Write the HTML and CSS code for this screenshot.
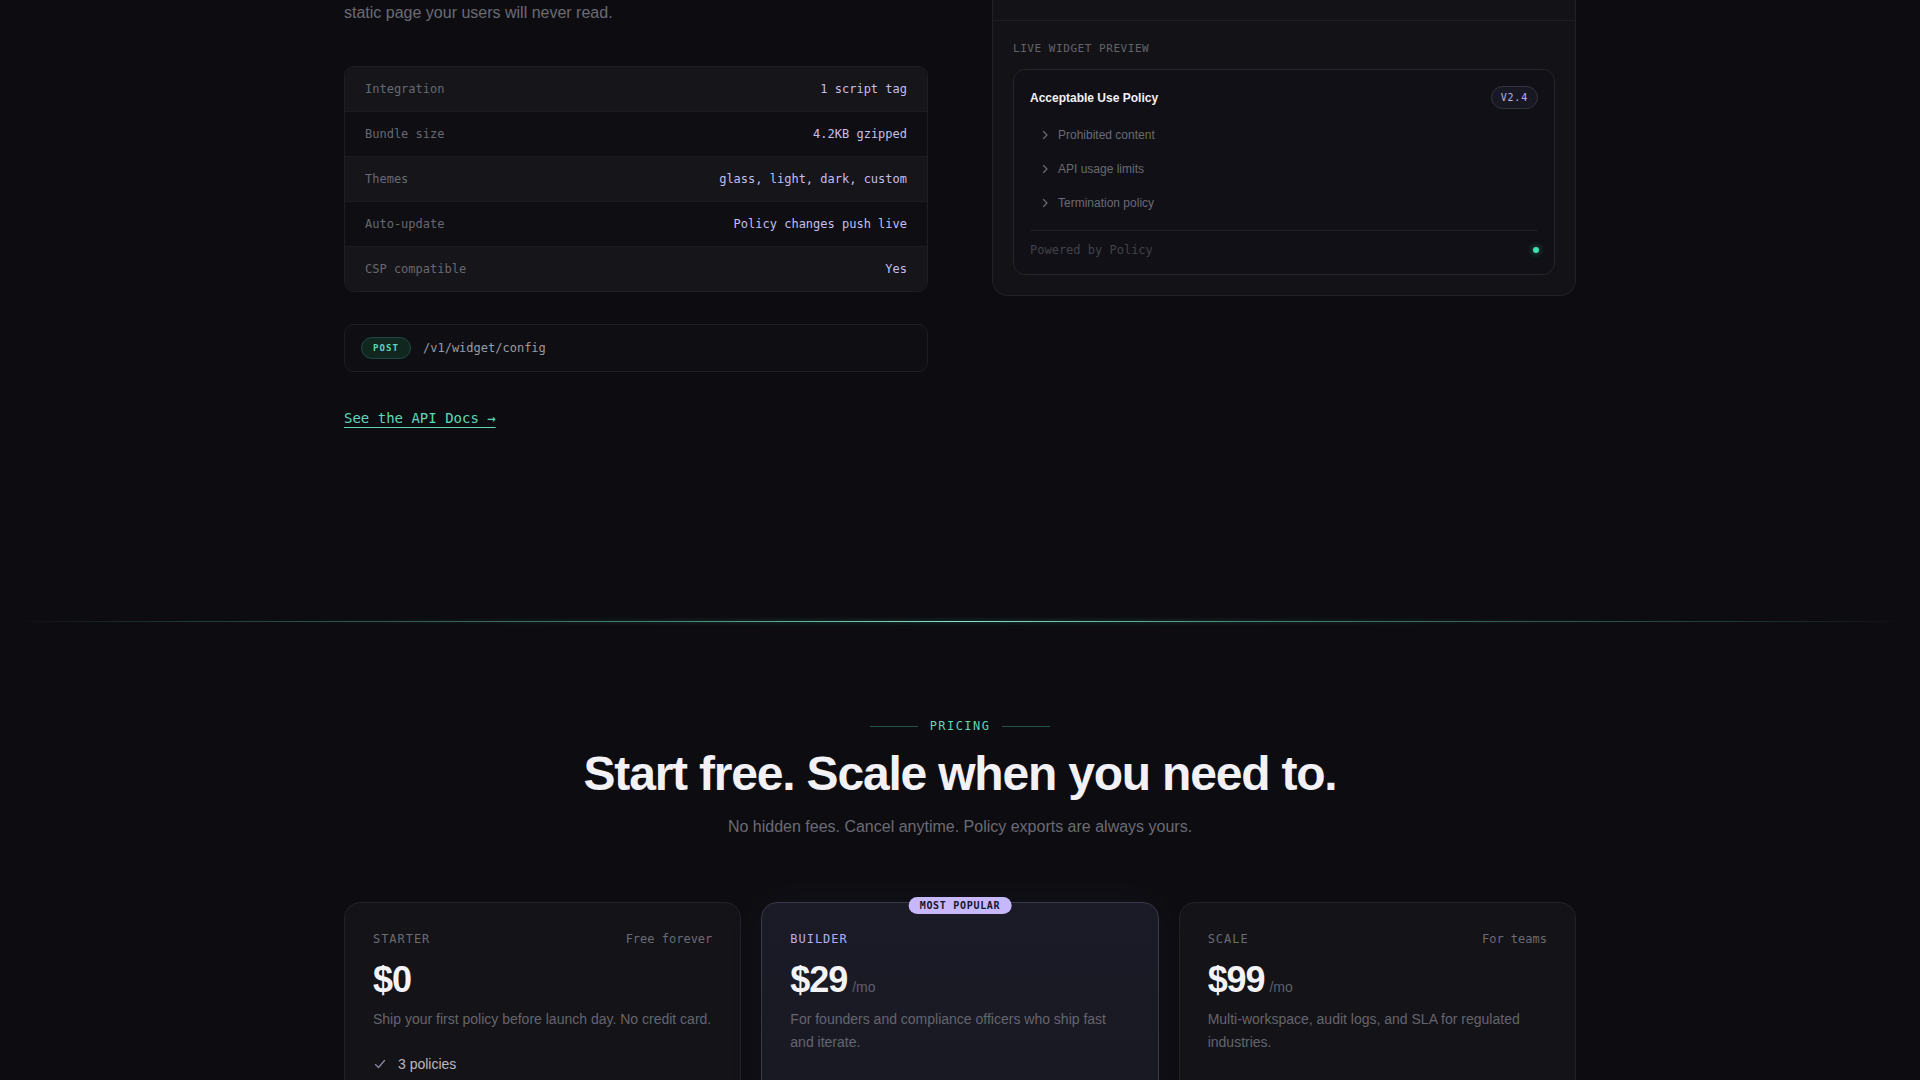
FILE: index.html
```html
<!DOCTYPE html>
<html lang="en">
<head>
<meta charset="utf-8">
<title>Policy — Widget &amp; Pricing</title>
<link rel="stylesheet" href="styles.css">
</head>
<body>
<main class="page">
  <section class="feature">
    <div class="wrap feature-grid">
      <div class="feature-copy">
        <p class="lead">static page your users will never read.</p>
        <div class="spec-table">
          <div class="spec-row"><span class="spec-key">Integration</span><span class="spec-val">1 script tag</span></div>
          <div class="spec-row"><span class="spec-key">Bundle size</span><span class="spec-val">4.2KB gzipped</span></div>
          <div class="spec-row"><span class="spec-key">Themes</span><span class="spec-val">glass, light, dark, custom</span></div>
          <div class="spec-row"><span class="spec-key">Auto-update</span><span class="spec-val">Policy changes push live</span></div>
          <div class="spec-row"><span class="spec-key">CSP compatible</span><span class="spec-val">Yes</span></div>
        </div>
        <div class="endpoint">
          <span class="method">POST</span>
          <span class="path">/v1/widget/config</span>
        </div>
        <a class="docs-link" href="#">See the API Docs →</a>
      </div>

      <div class="preview">
        <div class="preview-bar"></div>
        <div class="preview-body">
          <div class="preview-label">LIVE WIDGET PREVIEW</div>
          <div class="widget">
            <div class="widget-head">
              <span class="widget-title">Acceptable Use Policy</span>
              <span class="version">V2.4</span>
            </div>
            <ul class="widget-list">
              <li><svg class="chev" viewBox="0 0 10 10" width="10" height="10"><path d="M3.5 1.5 L7 5 L3.5 8.5" /></svg>Prohibited content</li>
              <li><svg class="chev" viewBox="0 0 10 10" width="10" height="10"><path d="M3.5 1.5 L7 5 L3.5 8.5" /></svg>API usage limits</li>
              <li><svg class="chev" viewBox="0 0 10 10" width="10" height="10"><path d="M3.5 1.5 L7 5 L3.5 8.5" /></svg>Termination policy</li>
            </ul>
            <div class="widget-foot">
              <span class="powered">Powered by Policy</span>
              <span class="dot"></span>
            </div>
          </div>
        </div>
      </div>
    </div>
  </section>

  <div class="divider"></div>

  <section class="pricing">
    <div class="wrap">
      <div class="eyebrow"><span class="eyebrow-line"></span><span class="eyebrow-text">PRICING</span><span class="eyebrow-line"></span></div>
      <h2 class="pricing-title">Start free. Scale when you need to.</h2>
      <p class="pricing-sub">No hidden fees. Cancel anytime. Policy exports are always yours.</p>

      <div class="plans">
        <article class="plan">
          <div class="plan-top"><span class="plan-name">STARTER</span><span class="plan-note">Free forever</span></div>
          <div class="price">$0</div>
          <p class="plan-desc">Ship your first policy before launch day. No credit card.</p>
          <ul class="features">
            <li><svg class="check" viewBox="0 0 14 14" width="14" height="14"><path d="M2.5 7.5 L5.5 10.5 L11.5 3.5"/></svg>3 policies</li>
            <li><svg class="check" viewBox="0 0 14 14" width="14" height="14"><path d="M2.5 7.5 L5.5 10.5 L11.5 3.5"/></svg>Hosted policy pages</li>
            <li><svg class="check" viewBox="0 0 14 14" width="14" height="14"><path d="M2.5 7.5 L5.5 10.5 L11.5 3.5"/></svg>Embeddable widget</li>
          </ul>
        </article>

        <article class="plan plan-featured">
          <span class="popular">MOST POPULAR</span>
          <div class="plan-top"><span class="plan-name plan-name-accent">BUILDER</span></div>
          <div class="price">$29<span class="per">/mo</span></div>
          <p class="plan-desc">For founders and compliance officers who ship fast and iterate.</p>
          <ul class="features">
            <li><svg class="check" viewBox="0 0 14 14" width="14" height="14"><path d="M2.5 7.5 L5.5 10.5 L11.5 3.5"/></svg>Unlimited policies</li>
            <li><svg class="check" viewBox="0 0 14 14" width="14" height="14"><path d="M2.5 7.5 L5.5 10.5 L11.5 3.5"/></svg>Custom themes</li>
          </ul>
        </article>

        <article class="plan">
          <div class="plan-top"><span class="plan-name">SCALE</span><span class="plan-note">For teams</span></div>
          <div class="price">$99<span class="per">/mo</span></div>
          <p class="plan-desc">Multi-workspace, audit logs, and SLA for regulated industries.</p>
          <ul class="features">
            <li><svg class="check" viewBox="0 0 14 14" width="14" height="14"><path d="M2.5 7.5 L5.5 10.5 L11.5 3.5"/></svg>Everything in Builder</li>
            <li><svg class="check" viewBox="0 0 14 14" width="14" height="14"><path d="M2.5 7.5 L5.5 10.5 L11.5 3.5"/></svg>Audit logs</li>
          </ul>
        </article>
      </div>
    </div>
  </section>
</main>
</body>
</html>
```

FILE: styles.css
```css
:root {
  --bg: #0d0d11;
  --sans: "Liberation Sans", Arial, sans-serif;
  --mono: "DejaVu Sans Mono", "Liberation Mono", monospace;
  --muted: #6b6b75;
  --line: #1e1e25;
  --teal: #5fd6b8;
  --lav: #c3bff0;
}

* { box-sizing: border-box; }

html, body {
  margin: 0;
  padding: 0;
  background: var(--bg);
  color: #e8e8ee;
  font-family: var(--sans);
}

.wrap {
  width: 1232px;
  margin: 0 auto;
}

/* ---------- feature ---------- */
.feature-grid {
  display: grid;
  grid-template-columns: 584px 584px;
  column-gap: 64px;
  align-items: start;
}

.feature-copy {
  display: flex;
  flex-direction: column;
  align-items: stretch;
}

.lead {
  margin: 0;
  font-size: 16px;
  line-height: 26px;
  color: var(--muted);
}

.spec-table {
  margin-top: 40px;
  border: 1px solid var(--line);
  border-radius: 10px;
  overflow: hidden;
}

.spec-row {
  height: 45px;
  padding: 0 20px;
  display: flex;
  align-items: center;
  justify-content: space-between;
  font-family: var(--mono);
  font-size: 12px;
  background: #0f0f13;
  border-top: 1px solid #1b1b21;
}
.spec-row:first-child { border-top: 0; height: 44px; }
.spec-row:nth-child(odd) { background: #15151a; }

.spec-key { color: #686871; }
.spec-val { color: var(--lav); }

.endpoint {
  margin-top: 32px;
  height: 48px;
  padding: 0 16px;
  display: flex;
  align-items: center;
  gap: 12px;
  border: 1px solid var(--line);
  border-radius: 10px;
  background: #0f0f13;
}

.method {
  display: inline-block;
  padding: 0 11px;
  height: 22px;
  line-height: 20px;
  border-radius: 999px;
  border: 1px solid #1f4a42;
  background: #10261f;
  color: var(--teal);
  font-family: var(--mono);
  font-size: 9px;
  font-weight: 700;
  letter-spacing: 0.12em;
}

.path {
  font-family: var(--mono);
  font-size: 12px;
  color: #9b9ba4;
}

.docs-link {
  align-self: flex-start;
  margin-top: 36px;
  font-family: var(--mono);
  font-size: 14px;
  line-height: 20px;
  color: var(--teal);
  text-decoration: underline;
  text-decoration-thickness: 1px;
  text-underline-offset: 4px;
}

/* preview card */
.preview {
  background: #121217;
  border: 1px solid #212128;
  border-top: 0;
  border-radius: 0 0 16px 16px;
}

.preview-bar {
  height: 21px;
  border-bottom: 1px solid #1f1f26;
}

.preview-body {
  padding: 20px 20px 20px;
}

.preview-label {
  font-family: var(--mono);
  font-size: 11px;
  line-height: 16px;
  letter-spacing: 0.05em;
  color: #63636c;
}

.widget {
  margin-top: 12px;
  padding: 16px;
  background: #101016;
  border: 1px solid #24242c;
  border-radius: 12px;
}

.widget-head {
  height: 23px;
  display: flex;
  align-items: center;
  justify-content: space-between;
}

.widget-title {
  font-size: 12px;
  font-weight: 700;
  color: #f1f1f6;
}

.version {
  height: 23px;
  line-height: 21px;
  padding: 0 9px;
  border-radius: 999px;
  border: 1px solid #34343f;
  background: #181822;
  font-family: var(--mono);
  font-size: 10px;
  letter-spacing: 0.08em;
  color: #b9b2ee;
}

.widget-list {
  list-style: none;
  margin: 9px 0 0;
  padding: 0;
}

.widget-list li {
  height: 34px;
  display: flex;
  align-items: center;
  gap: 8px;
  padding-left: 10px;
  font-size: 12px;
  color: #6a6a74;
}

.chev path {
  fill: none;
  stroke: #6a6a74;
  stroke-width: 1.2;
  stroke-linecap: round;
  stroke-linejoin: round;
}

.widget-foot {
  margin-top: 10px;
  padding-top: 11px;
  border-top: 1px solid #1f1f26;
  height: 28px;
  display: flex;
  align-items: center;
  justify-content: space-between;
}

.powered {
  font-family: var(--mono);
  font-size: 12px;
  line-height: 16px;
  color: #42424b;
}

.dot {
  width: 6px;
  height: 6px;
  margin-right: -1px;
  border-radius: 50%;
  background: #3fe0b2;
  box-shadow: 0 0 6px rgba(63, 224, 178, 0.6);
}

/* ---------- divider ---------- */
.divider {
  position: relative;
  margin: 193px 16px 0;
  height: 1px;
  background: linear-gradient(90deg,
    rgba(94, 234, 212, 0) 0%,
    rgba(94, 200, 180, 0.25) 10%,
    rgba(110, 220, 195, 0.55) 35%,
    #8ee9d2 50%,
    rgba(110, 220, 195, 0.55) 65%,
    rgba(94, 200, 180, 0.25) 90%,
    rgba(94, 234, 212, 0) 100%);
}
.divider::after {
  content: "";
  position: absolute;
  left: 10%;
  right: 10%;
  top: -4px;
  height: 9px;
  background: radial-gradient(ellipse at center, rgba(70, 200, 170, 0.12), rgba(70, 200, 170, 0) 70%);
}

/* ---------- pricing ---------- */
.pricing {
  padding-top: 96px;
  text-align: center;
}

.eyebrow {
  display: flex;
  justify-content: center;
  align-items: center;
  gap: 12px;
  height: 16px;
}

.eyebrow-line {
  width: 48px;
  height: 1px;
  background: #23534a;
}

.eyebrow-text {
  font-family: var(--mono);
  font-size: 12px;
  line-height: 16px;
  letter-spacing: 0.12em;
  color: var(--teal);
}

.pricing-title {
  margin: 12px 0 0;
  font-size: 48px;
  line-height: 56px;
  font-weight: 700;
  letter-spacing: -0.025em;
  color: #f1f1f6;
}

.pricing-sub {
  margin: 12px 0 0;
  font-size: 16px;
  line-height: 26px;
  color: #6b6b75;
}

.plans {
  margin-top: 62px;
  display: grid;
  grid-template-columns: repeat(3, 1fr);
  gap: 20px;
  text-align: left;
}

.plan {
  position: relative;
  padding: 29px 28px 32px;
  background: #131318;
  border: 1px solid #222229;
  border-radius: 16px;
}

.plan-featured {
  background: linear-gradient(180deg, #1b1b27 0%, #181822 100%);
  border-color: #3a3948;
  box-shadow: 0 0 40px rgba(140, 120, 255, 0.05);
}

.popular {
  position: absolute;
  top: -6px;
  left: 50%;
  transform: translateX(-50%);
  height: 17px;
  line-height: 17px;
  padding: 0 11px;
  border-radius: 999px;
  background: #c6b8fb;
  color: #17142a;
  font-family: var(--mono);
  font-size: 10px;
  font-weight: 700;
  letter-spacing: 0.07em;
  white-space: nowrap;
}

.plan-top {
  display: flex;
  justify-content: space-between;
  align-items: center;
  height: 14px;
  font-family: var(--mono);
  font-size: 12px;
  line-height: 14px;
}

.plan-name {
  letter-spacing: 0.08em;
  color: #6b6b74;
}
.plan-name-accent { color: #b7acf5; }

.plan-note { color: #6b6b74; }

.price {
  margin-top: 14px;
  height: 40px;
  font-size: 36px;
  line-height: 40px;
  font-weight: 700;
  letter-spacing: -0.03em;
  color: #f4f4f8;
}

.per {
  margin-left: 5px;
  font-size: 14px;
  line-height: 1;
  font-weight: 400;
  letter-spacing: 0;
  color: #5f5f69;
}

.plan-desc {
  margin: 8px 0 0;
  font-size: 14px;
  line-height: 23px;
  color: #65656e;
}

.features {
  list-style: none;
  margin: 21px 0 0;
  padding: 0;
  display: flex;
  flex-direction: column;
  gap: 10px;
}

.features li {
  display: flex;
  align-items: center;
  gap: 11px;
  font-size: 14px;
  line-height: 24px;
  color: #b9b9c1;
}

.check path {
  fill: none;
  stroke: #8f8aa8;
  stroke-width: 1.2;
  stroke-linecap: round;
  stroke-linejoin: round;
}
```
